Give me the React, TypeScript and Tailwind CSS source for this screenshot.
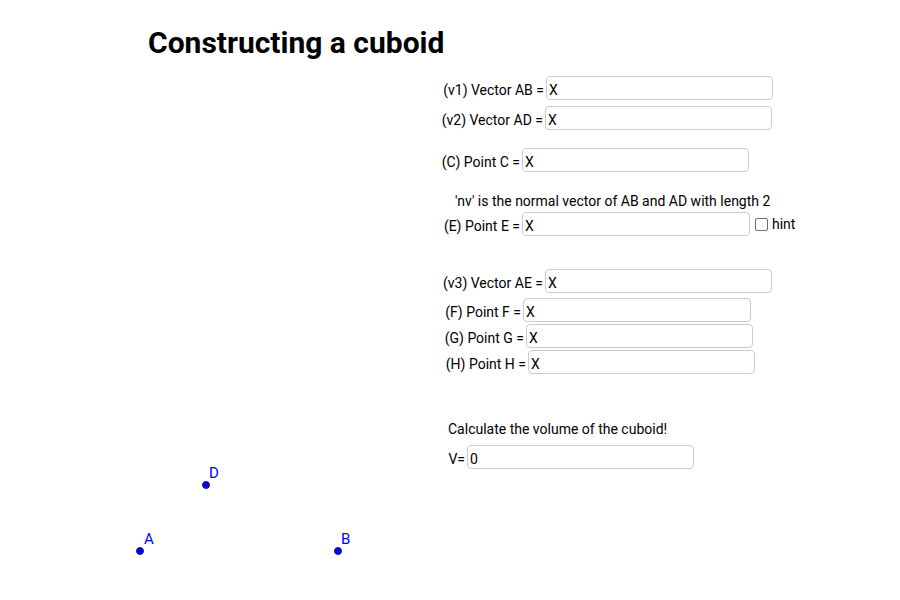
import React from "react";

type RowProps = {
  label: string;
  labelW: string;
  inputW: string;
  mt: string;
  value: string;
  extra?: React.ReactNode;
};

function Row({ label, labelW, inputW, mt, value, extra }: RowProps) {
  return (
    <div className={`flex h-[24px] items-start ${mt}`}>
      <span
        className={`${labelW} h-[24px] shrink-0 whitespace-nowrap pr-[2px] pt-[6px] text-right text-[14px] leading-[16px] text-black`}
      >
        {label}
      </span>
      <input
        readOnly
        value={value}
        className={`${inputW} h-[24px] shrink-0 rounded-[4px] border border-[#cbcbcb] bg-white pb-0 pl-[2px] pt-[4px] text-[14px] leading-[16px] text-black outline-none`}
        style={{ fontFamily: "Roboto, 'Liberation Sans', sans-serif" }}
      />
      {extra}
    </div>
  );
}

export default function App() {
  return (
    <div
      className="relative h-[600px] w-[900px] overflow-hidden bg-white text-black"
      style={{ fontFamily: "Roboto, 'Liberation Sans', sans-serif" }}
    >
      <div className="h-[76px] pl-[148px] pt-[28px]">
        <h1 className="text-[30px] font-bold leading-[30px] text-black">Constructing a cuboid</h1>
      </div>

      <div className="ml-[440px] flex flex-col">
        <Row label="(v1) Vector AB =" labelW="w-[106px]" inputW="w-[227px]" mt="mt-0" value="X" />
        <Row label="(v2) Vector AD =" labelW="w-[105px]" inputW="w-[227px]" mt="mt-[6px]" value="X" />
        <Row label="(C) Point C =" labelW="w-[82px]" inputW="w-[227px]" mt="mt-[18px]" value="X" />
        <div className="mt-[19px] h-[20px] pl-[15px] text-[14px] leading-[20px] whitespace-nowrap">
          'nv' is the normal vector of AB and AD with length 2
        </div>
        <Row
          label="(E) Point E ="
          labelW="w-[82px]"
          inputW="w-[228px]"
          mt="mt-[1px]"
          value="X"
          extra={
            <div className="ml-[5px] flex h-[24px] items-center">
              <span className="h-[13px] w-[13px] rounded-[2px] border border-[#6e6e6e] bg-white" />
              <span className="ml-[4px] text-[14px] leading-[16px]">hint</span>
            </div>
          }
        />
        <Row label="(v3) Vector AE =" labelW="w-[105px]" inputW="w-[227px]" mt="mt-[33px]" value="X" />
        <Row label="(F) Point F =" labelW="w-[83px]" inputW="w-[228px]" mt="mt-[5px]" value="X" />
        <Row label="(G) Point G =" labelW="w-[86px]" inputW="w-[227px]" mt="mt-[2px]" value="X" />
        <Row label="(H) Point H =" labelW="w-[88px]" inputW="w-[227px]" mt="mt-[2px]" value="X" />
        <div className="mt-[45px] h-[20px] pl-[8px] text-[14px] leading-[20px] whitespace-nowrap">
          Calculate the volume of the cuboid!
        </div>
        <Row label="V=" labelW="w-[27px]" inputW="w-[227px]" mt="mt-[6px]" value="0" />
      </div>

      {/* geometry canvas points */}
      <div className="absolute left-[136px] top-[547px] h-[8px] w-[8px] rounded-full border border-[#1a1a66] bg-[#0000ff]" />
      <span className="absolute left-[144px] top-[532px] text-[15px] leading-[15px] text-[#0000ff]">A</span>

      <div className="absolute left-[334px] top-[547px] h-[8px] w-[8px] rounded-full border border-[#1a1a66] bg-[#0000ff]" />
      <span className="absolute left-[341px] top-[532px] text-[15px] leading-[15px] text-[#0000ff]">B</span>

      <div className="absolute left-[202px] top-[481px] h-[8px] w-[8px] rounded-full border border-[#1a1a66] bg-[#0000ff]" />
      <span className="absolute left-[209px] top-[466px] text-[15px] leading-[15px] text-[#0000ff]">D</span>
    </div>
  );
}
